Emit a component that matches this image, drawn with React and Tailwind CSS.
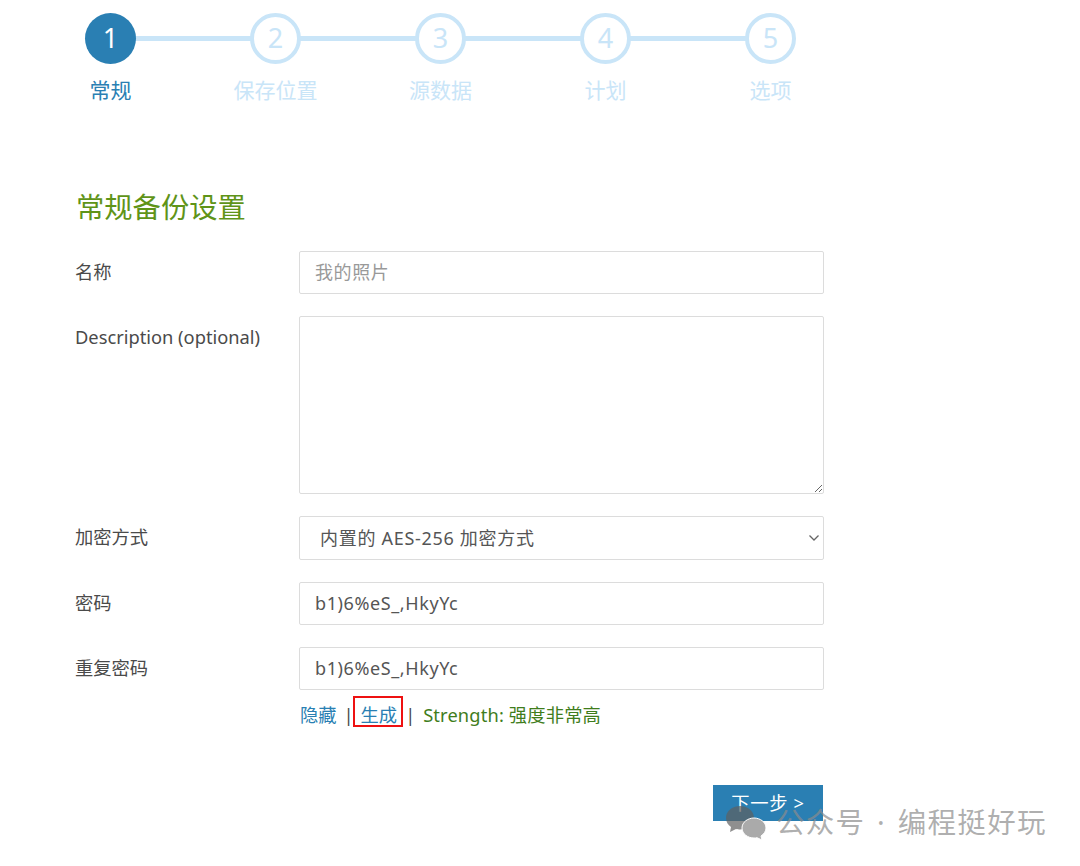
function Step({ n, label, active, first, last }) {
  return (
    <div className="relative flex w-[165px] flex-col items-center">
      {!first && <div className="absolute left-0 top-[23px] h-[5px] w-1/2 bg-[#c9e5f8]" />}
      {!last && <div className="absolute right-0 top-[23px] h-[5px] w-1/2 bg-[#c9e5f8]" />}
      <div className={active
        ? "relative z-10 flex h-[51px] w-[51px] items-center justify-center rounded-full bg-[#2a7fb3] text-[27px] text-white"
        : "relative z-10 flex h-[51px] w-[51px] items-center justify-center rounded-full border-[4px] border-[#c9e5f8] bg-white text-[27px] text-[#c9e5f8]"}>{n}</div>
      <div className={active ? "mt-[12px] text-[21px] leading-[28px] text-[#2a7fb3]" : "mt-[12px] text-[21px] leading-[28px] text-[#c9e5f8]"}>{label}</div>
    </div>
  );
}
function Row({ label, children }) {
  return (
    <div className="flex">
      <label className="w-[224px] shrink-0 pt-[8px] text-[18.3px] leading-[26px] text-[#4a4a4a]">{label}</label>
      <div className="w-[525px]">{children}</div>
    </div>
  );
}
const inputCls = "block h-[43px] w-full rounded-[2px] border border-[#dcdcdc] bg-white px-[15px] pb-[2px] text-[18px] tracking-[0.6px] text-[#555] outline-none placeholder:text-[#999]";
export default function App() {
  return (
    <div className="relative h-[866px] w-[1080px] overflow-hidden bg-white font-['Noto_Sans','Noto_Sans_CJK_SC',sans-serif]">
      <div className="flex pl-[28px] pt-[13px]">
        <Step n="1" label="常规" active first />
        <Step n="2" label="保存位置" />
        <Step n="3" label="源数据" />
        <Step n="4" label="计划" />
        <Step n="5" label="选项" last />
      </div>
      <div className="pl-[75px] pt-[84px]">
        <h2 className="pl-px text-[28.3px] leading-[38px] text-[#5f9418]">常规备份设置</h2>
        <div className="mt-[25px] flex flex-col gap-[22px]">
          <Row label="名称"><input className={inputCls} placeholder="我的照片" /></Row>
          <Row label="Description (optional)">
            <textarea className="block h-[178px] w-full rounded-[2px] border border-[#dcdcdc] bg-white px-[15px] outline-none" />
          </Row>
          <Row label="加密方式">
            <div className="relative">
              <select className="block h-[44px] w-full appearance-none rounded-[2px] border border-[#dcdcdc] bg-white pl-[20px] pr-[30px] text-[18px] tracking-[0.7px] text-[#555] outline-none">
                <option>内置的 AES-256 加密方式</option>
              </select>
              <svg width="12" height="8" viewBox="0 0 12 8" className="pointer-events-none absolute right-[4px] top-[18px]" fill="none" stroke="#666" strokeWidth="1.3">
                <path d="M1.500 1.500 6 6l4.500-4.500" />
              </svg>
            </div>
          </Row>
          <Row label="密码"><input className={inputCls} defaultValue="b1)6%eS_,HkyYc" /></Row>
          <Row label="重复密码">
            <input className={inputCls} defaultValue="b1)6%eS_,HkyYc" />
            <div className="mt-[12px] flex items-center text-[18.3px] leading-[26px]">
              <a className="ml-px text-[#2a7fb3]">隐藏</a>
              <span className="ml-[7px] w-[10px] text-center text-[#4a4a4a]">|</span>
              <a className="relative ml-[7px] text-[#2a7fb3]">
                生成
                <span className="absolute -left-[8px] -right-[6px] -top-[6px] bottom-[1px] border-2 border-[#ee1111]" />
              </a>
              <span className="ml-[8px] w-[10px] text-center text-[#4a4a4a]">|</span>
              <span className="ml-[8px] tracking-[0.15px] text-[#3f7d1c]">Strength: 强度非常高</span>
            </div>
          </Row>
        </div>
        <div className="mt-[57px] flex w-[748px] justify-end">
          <button className="h-[36px] w-[110px] bg-[#2a7fb3] text-[18.3px] tracking-[0.7px] text-white">下一步 &gt;</button>
        </div>
      </div>
      <div className="absolute left-[725px] top-[802px] flex items-center gap-[9px] text-[28.5px] tracking-[1.3px] [word-spacing:3px] text-[#8c8c8c]/70">
        <svg width="42" height="36" viewBox="0 0 42 36">
          <path d="M15 1C7 1 1 6 1 13c0 4 2 7 5 9l-1 5 6-3c1 .3 3 .5 4 .5 7 0 14-5 14-11.500C29 6 23 1 15 1z" fill="#5f5f5f" fillOpacity=".7"/>
          <path d="M29 13c-6 0-12 4-12 10s6 10 12 10c1 0 2 0 3-.3l5 2.300-1-4c3-2 5-5 5-8 0-6-6-10-12-10z" fill="#aaaaaa" stroke="#fff"/>
        </svg>
        <span className="-translate-y-px">公众号 · 编程挺好玩</span>
      </div>
    </div>
  );
}
